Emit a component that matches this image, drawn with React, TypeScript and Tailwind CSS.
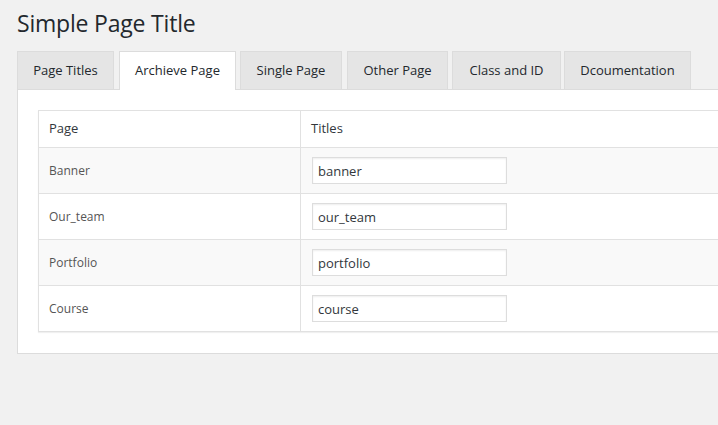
import React from 'react';

const tabs = ['Page Titles', 'Archieve Page', 'Single Page', 'Other Page', 'Class and ID', 'Dcoumentation'];

const rows = [
  { page: 'Banner', value: 'banner' },
  { page: 'Our_team', value: 'our_team' },
  { page: 'Portfolio', value: 'portfolio' },
  { page: 'Course', value: 'course' },
];

// widths and left gaps read off the screenshot
const tabSizes = [
  'w-[97px]',
  'ml-[5px] w-[117px]',
  'ml-[4px] w-[102px]',
  'ml-[5px] w-[101px]',
  'ml-[4px] w-[109px]',
  'ml-[3px] w-[127px]',
];

export default function App() {
  return (
    <div className="min-h-[425px] w-[718px] overflow-hidden bg-[#f1f1f1] font-['Open_Sans',sans-serif] text-[#23282d]">
      <div className="pl-[17px] pt-[8px]">
        <h1 className="text-[23px] leading-[30px] font-normal tracking-[-0.2px]">Simple Page Title</h1>

        <div className="mt-[13px] flex items-end border-b border-[#dcdcdc] w-[720px]">
          {tabs.map((t, i) =>
            i === 1 ? (
              <div
                key={t}
                className={`${tabSizes[i]} -mb-px h-[39px] flex items-center justify-center border border-b-0 border-[#dcdcdc] bg-white text-[13px] text-[#23282d]`}
              >
                {t}
              </div>
            ) : (
              <div
                key={t}
                className={`${tabSizes[i]} h-[38px] flex items-center justify-center border border-b-0 border-[#dcdcdc] bg-[#e5e5e5] text-[13px] text-[#23282d]`}
              >
                {t}
              </div>
            )
          )}
        </div>

        <div className="w-[720px] border border-t-0 border-[#dcdcdc] bg-white pl-[20px] pt-[20px] pb-[21px]">
          <table className="w-[700px] border-collapse border border-[#e1e1e1] shadow-[0_1px_1px_rgba(0,0,0,0.06)]">
            <thead>
              <tr className="h-[37px] bg-white">
                <th className="w-[262px] border border-[#e1e1e1] pl-[10px] text-left text-[13px] font-normal text-[#32373c]">
                  Page
                </th>
                <th className="border border-[#e1e1e1] pl-[10px] text-left text-[13px] font-normal text-[#32373c]">
                  Titles
                </th>
              </tr>
            </thead>
            <tbody>
              {rows.map((r, i) => (
                <tr key={r.page} className={`h-[46px] ${i % 2 === 0 ? 'bg-[#f9f9f9]' : 'bg-white'}`}>
                  <td className="border border-[#e1e1e1] pl-[10px] pt-px text-[12px] text-[#555]">{r.page}</td>
                  <td className="border border-[#e1e1e1] pl-[11px]">
                    <input
                      readOnly
                      value={r.value}
                      className="block h-[27px] w-[195px] border border-[#ddd] bg-white px-[5px] text-[13px] text-[#32373c] shadow-[inset_0_1px_2px_rgba(0,0,0,0.07)] outline-none"
                    />
                  </td>
                </tr>
              ))}
            </tbody>
          </table>
        </div>
      </div>
    </div>
  );
}
